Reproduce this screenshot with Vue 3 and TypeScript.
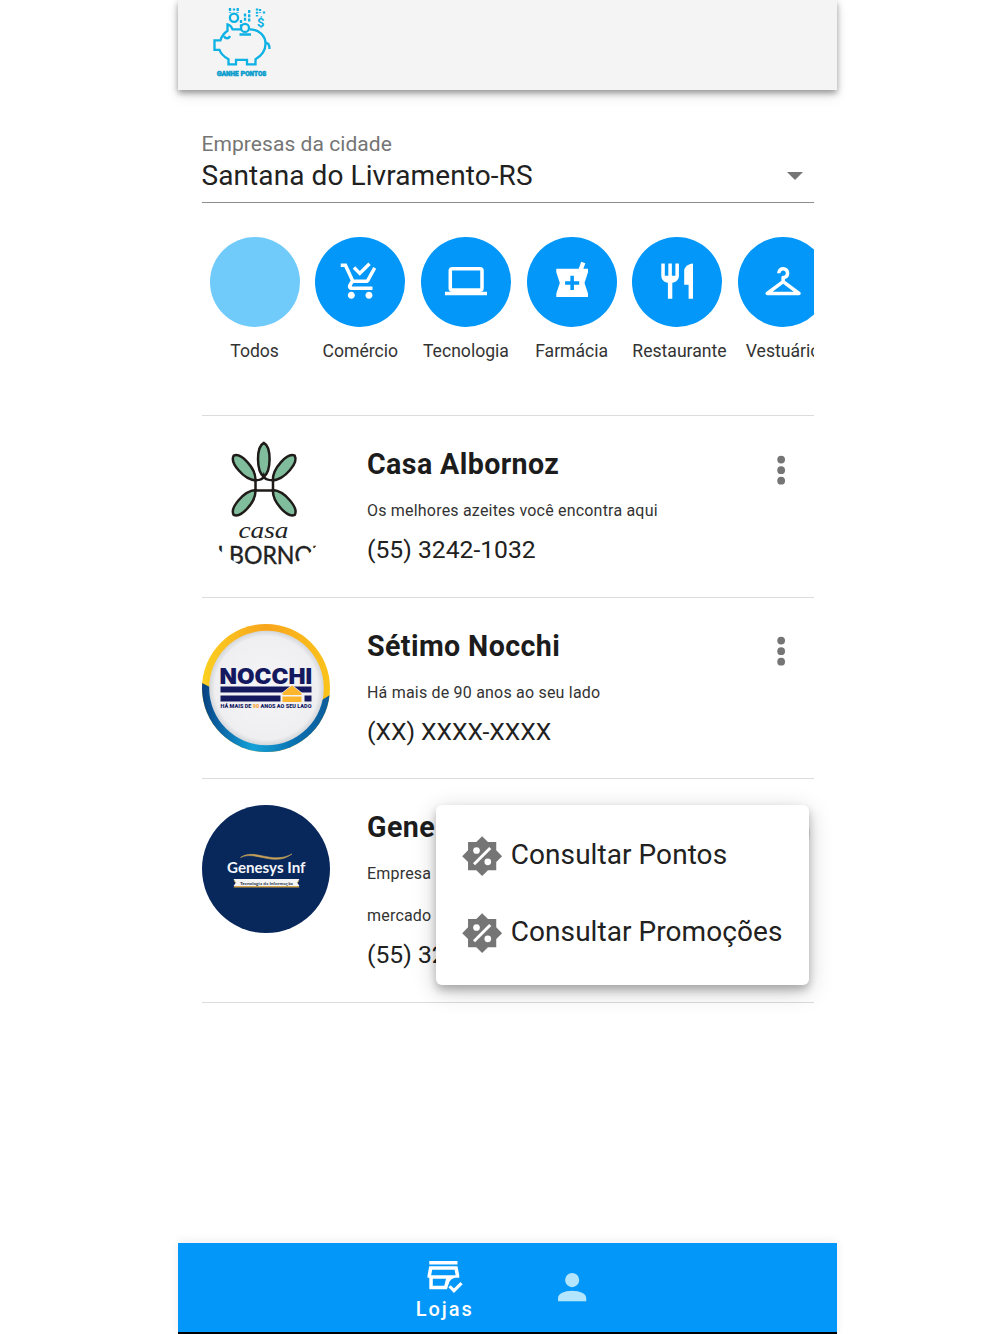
<script setup lang="ts">
interface Category { label: string; icon: string }
interface Store { name: string; lines: string[]; phone: string; logo: string }

const categories: Category[] = [
  { label: 'Todos', icon: '' },
  { label: 'Comércio', icon: 'M9 20c0 1.1-.9 2-2 2s-2-.9-2-2 .9-2 2-2 2 .9 2 2m8-2c-1.1 0-2 .9-2 2s.9 2 2 2 2-.9 2-2-.9-2-2-2m-9.8-3.2v-.1l.9-1.7h7.4c.7 0 1.4-.4 1.7-1l3.9-7-1.7-1-3.9 7h-7L4.3 2H1v2h2l3.6 7.6L5.2 14c-.1.3-.2.6-.2 1 0 1.1.9 2 2 2h12v-2H7.4c-.1 0-.2-.1-.2-.2M18 2.8l-1.4-1.4-4.8 4.8-2.6-2.6L7.8 5l4 4z' },
  { label: 'Tecnologia', icon: 'M4 6h16v10H4m16 2a2 2 0 0 0 2-2V6a2 2 0 0 0-2-2H4c-1.11 0-2 .89-2 2v10a2 2 0 0 0 2 2H0v2h24v-2z' },
  { label: 'Farmácia', icon: 'M21 5h-2.65l1.15-3.15L17.15 1l-1.46 4H3v2l2 6-2 6v2h18v-2l-2-6 2-6zm-5 9h-3v3h-2v-3H8v-2h3V9h2v3h3z' },
  { label: 'Restaurante', icon: 'M11 9H9V2H7v7H5V2H3v7c0 2.12 1.66 3.84 3.75 3.97V22h2.5v-9.03C11.34 12.84 13 11.12 13 9V2h-2zm5-3v8h2.5v8H21V2c-2.76 0-5 2.24-5 4z' },
  { label: 'Vestuário', icon: 'M21.6 18.2L13 11.75v-.91a3.496 3.496 0 0 0-.18-6.75A3.51 3.51 0 0 0 8.5 7.5h2c0-.83.67-1.5 1.5-1.5s1.5.67 1.5 1.5c0 .84-.69 1.52-1.53 1.5-.54-.01-.97.45-.97.99v1.76L2.4 18.2c-.77.58-.36 1.8.6 1.8h18c.96 0 1.37-1.22.6-1.8M6 18l6-4.5 6 4.5z' },
]

const stores: Store[] = [
  { name: 'Casa Albornoz', lines: ['Os melhores azeites você encontra aqui'], phone: '(55) 3242-1032', logo: 'casa' },
  { name: 'Sétimo Nocchi', lines: ['Há mais de 90 anos ao seu lado'], phone: '(XX) XXXX-XXXX', logo: 'nocchi' },
  { name: 'Gene', lines: ['Empresa', 'mercado'], phone: '(55) 32', logo: 'genesys' },
]

const actions: string[] = ['Consultar Pontos', 'Consultar Promoções']
</script>

<template>
  <div class="page">
    <div class="phone">
      <header class="topbar">
        <svg class="brand" width="64" height="74" viewBox="0 0 64 74" fill="none" stroke="#0db1e4" stroke-width="2.300">
          <path d="M32 25.300h-8.500c-1-2.500-2.500-4.500-5-5v6.500c-3.500 2.500-6 5.500-7 9.500h-6v9.500h5c1 3.500 4.500 7 9 9.500v5h7.500v-4.500h11v4.500h8.500v-5c6-3.500 10-9 10-15.500 0-8.500-7-14.500-16-14.500" />
          <path d="M15 32c1.200 3 4.800 3 6 0M57 39c2.500 0 3.500 3 3.500 6M30.500 30.500h11.500" />
          <circle cx="25" cy="13.700" r="4.100" />
          <circle cx="36" cy="23.900" r="4" />
          <path d="M21 4v5M28.700 4v5M32 16v7M36 9.500v8M40.200 6v12" stroke-dasharray="3 1.200" />
          <path d="M25 4.500v3M48 4.500v8M51 5v4M55 7.500v2" stroke-dasharray="2 1.200" />
          <text x="48" y="23" class="coin">$</text>
          <text x="7.800" y="71.600" textLength="49.500" lengthAdjust="spacingAndGlyphs" class="brand-name">Ganhe Pontos</text>
        </svg>
      </header>

      <main class="content">
        <section class="select">
          <span class="select-label">Empresas da cidade</span>
          <div class="select-value">
            <span>Santana do Livramento-RS</span>
            <i class="caret"></i>
          </div>
        </section>

        <nav class="categories">
          <div v-for="c in categories" :key="c.label" class="category">
            <span class="disc" :class="{ active: !c.icon }">
              <svg v-if="c.icon" class="icon" viewBox="0 0 24 24"><path :d="c.icon" /></svg>
            </span>
            <span class="category-label">{{ c.label }}</span>
          </div>
        </nav>

        <section class="stores">
          <article v-for="(s, i) in stores" :key="s.name" class="store">
            <svg class="logo" viewBox="0 0 128 128">
              <g v-if="s.logo === 'casa'">
                <clipPath id="casa-clip"><circle cx="64" cy="64" r="64" /></clipPath>
                <g fill="#7fbd9d" stroke="#1e1b18" stroke-width="2.500">
                  <path d="M-17 0C-13-7.700 11-7.700 17 0 11 7.700-13 7.700-17 0z" transform="translate(61.800 17.800) rotate(90)" />
                  <path d="M-16.500 0C-14-7.700 8-8.300 16.500 0 8 8.300-14 7.700-16.500 0z" transform="translate(42.600 26) rotate(48.700)" />
                  <path d="M-16.500 0C-14-7.700 8-8.300 16.500 0 8 8.300-14 7.700-16.500 0z" transform="translate(81.800 26) rotate(131.300)" />
                  <path d="M-16.500 0C-14-7.700 8-8.300 16.500 0 8 8.300-14 7.700-16.500 0z" transform="translate(42.600 60.500) rotate(-48.700)" />
                  <path d="M-16.500 0C-14-7.700 8-8.300 16.500 0 8 8.300-14 7.700-16.500 0z" transform="translate(81.800 60.500) rotate(-131.300)" />
                  <path d="M53.500 38v11M71 38v11M53.500 48.600H71M53.500 38.300c4.500 0 7.500-1 8.300-4 .8 3 4.700 4 9.200 4" fill="none" />
                </g>
                <text x="36.500" y="96" textLength="50" lengthAdjust="spacingAndGlyphs" class="casa-script">casa</text>
                <g clip-path="url(#casa-clip)">
                  <text x="-.5" y="121.500" textLength="125" lengthAdjust="spacingAndGlyphs" class="casa-caps">ALBORNOZ</text>
                </g>
              </g>
              <g v-else-if="s.logo === 'nocchi'">
                <defs>
                  <linearGradient id="gold" x1="0" x2="1"><stop offset="0" stop-color="#fbd020" /><stop offset=".5" stop-color="#f8a51c" /><stop offset="1" stop-color="#fbc31b" /></linearGradient>
                  <linearGradient id="sea" x1="0" x2="1"><stop offset="0" stop-color="#083f7d" /><stop offset=".1" stop-color="#0a5c9e" /><stop offset=".4" stop-color="#13a2d8" /><stop offset=".75" stop-color="#0a6eae" /><stop offset="1" stop-color="#0d5c9a" /></linearGradient>
                  <radialGradient id="plate"><stop offset="0" stop-color="#f5f5f7" /><stop offset=".9" stop-color="#efeff1" /><stop offset="1" stop-color="#d4d6da" /></radialGradient>
                  <clipPath id="ring"><circle cx="64" cy="64" r="64" /></clipPath>
                </defs>
                <circle cx="64" cy="64" r="64" fill="url(#gold)" />
                <path clip-path="url(#ring)" d="M0 59l10 5 108 13 10-6v57H0z" fill="url(#sea)" />
                <circle cx="64.500" cy="64" r="57.300" fill="url(#plate)" />
                <text x="17.500" y="59.500" textLength="92.500" lengthAdjust="spacingAndGlyphs" class="nocchi-name">NOCCHI</text>
                <path d="M18.500 62.500h91v6h-91zM18.500 71.500h60v6h-60zM102.500 71.500h7v6h-7z" fill="#14195f" />
                <path d="M90 61.500L80.500 69v2h19v-2zM80.500 72.500h19V78h-19z" fill="#fbb62d" stroke="#f4f4f6" stroke-width="1.200" paint-order="stroke" />
                <text x="18.500" y="84" textLength="91" lengthAdjust="spacingAndGlyphs" class="nocchi-tag">HÁ MAIS DE <tspan fill="#f2a33a">90</tspan> ANOS AO SEU LADO</text>
              </g>
              <g v-else>
                <circle cx="64" cy="64" r="64" fill="#08275b" />
                <path d="M38.500 52.500c7-5 15-3 25-1s18 2 26.500-2.500c-9 6.500-17 6-27 4s-17-4-24.500-.5z" fill="#c7a25a" stroke="#c7a25a" stroke-width=".6" />
                <text x="25" y="67.700" textLength="78.500" lengthAdjust="spacingAndGlyphs" class="genesys-name">Genesys Inf</text>
                <path d="M31.500 75.500h66l-2.500 3 2.500 4h-66l2.500-4z" fill="#d4a64b" />
                <path d="M31.500 74h66L95 77.500l2.500 3.500h-66l2.500-3.500z" fill="#f5f5f5" />
                <text x="38" y="79.500" textLength="53" lengthAdjust="spacingAndGlyphs" class="genesys-tag">Tecnologia da Informação</text>
              </g>
            </svg>
            <div class="info">
              <h2>{{ s.name }}</h2>
              <p v-for="l in s.lines" :key="l" class="desc">{{ l }}</p>
              <p class="tel">{{ s.phone }}</p>
            </div>
            <button class="more" :class="{ open: i === 2 }" aria-label="Opções">
              <svg class="icon" viewBox="0 0 24 24"><circle cx="12" cy="6" r="2.200" /><circle cx="12" cy="12" r="2.200" /><circle cx="12" cy="18" r="2.200" /></svg>
            </button>
            <div v-if="i === 2" class="menu">
              <div v-for="a in actions" :key="a" class="menu-item">
                <svg class="icon" viewBox="0 0 24 24">
                  <path d="M20 8.690V4h-4.690L12 .690 8.690 4H4v4.690L.690 12 4 15.310V20h4.690L12 23.310 15.310 20H20v-4.690L23.310 12z" />
                  <g fill="#fff"><circle cx="8.800" cy="8.800" r="1.900" /><circle cx="15.200" cy="15.200" r="1.900" /></g>
                  <path d="M7.400 16.600l9.200-9.200" stroke="#fff" stroke-width="1.700" />
                </svg>
                <span>{{ a }}</span>
              </div>
            </div>
          </article>
        </section>
      </main>

      <footer class="tabs">
        <div class="tab">
          <svg class="icon" viewBox="0 0 24 24">
            <path fill-rule="evenodd" d="M3 4h16v2H3zM3 7h16l1 5v1.500h-1.500c-2.500 0-4 1.500-4.500 3.500l-1 3H3v-6.500H2V12zm1.640 2L4.040 12h13.920l-.6-3zM5 14v4h6.500l1-4z" />
            <path d="M14.500 18.300l2.500 2.500 4.300-4.300" fill="none" stroke="#fff" stroke-width="1.800" />
          </svg>
          <span>Lojas</span>
        </div>
        <div class="tab idle">
          <svg class="icon" viewBox="0 0 24 24"><path d="M12 4a4 4 0 1 1 0 8 4 4 0 0 1 0-8m0 10c4.420 0 8 1.790 8 4v2H4v-2c0-2.210 3.580-4 8-4z" /></svg>
        </div>
      </footer>
    </div>
  </div>
</template>

<style>
body { margin: 0; background: #fff; }
</style>

<style scoped>
.page { height: 1334px; display: flex; overflow: hidden; font-family: Roboto, "Liberation Sans", sans-serif; color: #212121; }
.phone { width: 659.500px; height: 1334px; margin-left: 177.500px; display: flex; flex-direction: column; }
.topbar { height: 89.500px; flex: none; box-sizing: border-box; padding: 3.500px 0 0 31.700px; background: #f4f4f4; box-shadow: 0 3px 6px rgba(0, 0, 0, .36), 0 6px 12px rgba(0, 0, 0, .1); }
.brand { display: block; }
.coin { font: bold 13px Roboto, sans-serif; fill: #0db1e4; stroke: none; }
.brand-name { font: bold 8px Roboto, sans-serif; font-variant: small-caps; fill: #0a9dcd; stroke: #0a9dcd; stroke-width: .6px; }
.content { flex: 1; min-height: 0; padding: 0 23px 0 24px; }
.icon { width: 42.300px; height: 42.300px; display: block; fill: currentColor; }

.select { height: 113px; box-sizing: border-box; padding-top: 42px; border-bottom: 1px solid #8c8c8c; }
.select-label { display: block; height: 24.500px; line-height: 25px; font-size: 21px; letter-spacing: .060px; color: #757575; }
.select-value { display: flex; align-items: center; justify-content: space-between; height: 38px; font-size: 28px; letter-spacing: .090px; padding-right: 11px; }
.caret { margin-top: 2px; border: 8.500px solid transparent; border-top-color: #757575; border-bottom: 0; }

.categories { display: flex; gap: 15.700px; overflow: hidden; height: 178px; padding: 34px 0 0 8.100px; box-sizing: border-box; }
.category { flex: 0 0 90px; min-width: 0; display: flex; flex-direction: column; align-items: safe center; gap: 13px; }
.disc { width: 90px; height: 90px; border-radius: 50%; background: #0297f8; color: #fff; display: flex; align-items: center; justify-content: center; flex: none; }
.disc.active { background: #70cbfb; }
.category-label { font-size: 17.600px; line-height: 22px; color: #333; }

.stores { margin-top: 34.500px; border-top: 1px solid #dcdcdc; }
.store { position: relative; display: flex; align-items: flex-start; padding: 26px 0 26.500px; border-bottom: 1px solid #dcdcdc; }
.logo { width: 128px; height: 128px; flex: none; overflow: visible; }
.info { flex: 1; margin-left: 37.500px; }
.info h2 { margin: 0 0 3px; padding-top: 1px; font-size: 28.600px; line-height: 43px; font-weight: 700; letter-spacing: .400px; color: #1c1c1c; }
.desc { margin: 0; padding-top: 0; font-size: 16px; line-height: 42px; letter-spacing: .200px; color: #333; }
.desc:first-of-type { padding-top: 1px; }
.tel { margin: 0; font-size: 24.700px; line-height: 38px; margin-top: -1px; padding-bottom: 1px; }
.more { width: 58px; height: 58px; margin: -1px 4px 0 0; padding: 0; border: 0; border-radius: 50%; background: none; color: #757575; display: flex; align-items: center; justify-content: center; }
.more.open { background: #ddd; clip-path: inset(3px 0); }
.menu { position: absolute; right: 5px; top: 26px; width: 373px; height: 180px; box-sizing: border-box; padding: 12px 0 0 25.300px; border-radius: 6px; background: #fff; box-shadow: 0 5px 8px rgba(0, 0, 0, .24), 0 6px 24px rgba(0, 0, 0, .2); }
.menu-item { display: flex; align-items: center; height: 77px; font-size: 28px; letter-spacing: .060px; }
.menu-item .icon { margin: 1px 7.200px 0 0; color: #757575; }
.menu-item span { padding-bottom: 3px; }

.tabs { height: 91px; flex: none; box-sizing: border-box; border-bottom: 2px solid #000; padding-left: 2px; background: #0297f8; display: flex; justify-content: center; box-shadow: 0 -2px 10px rgba(0, 0, 0, .07); }
.tab { width: 127px; display: flex; flex-direction: column; align-items: center; justify-content: center; color: #fff; font-size: 20px; font-weight: 500; line-height: 24px; letter-spacing: 2px; }
.tab.idle { color: #b3e5fc; }

.casa-script { font: italic 24px "Liberation Serif", serif; fill: #222; }
.casa-caps { font: 25.500px Lato, sans-serif; fill: #222; stroke: #222; stroke-width: .4px; }
.nocchi-name { font: 900 21px Inter, sans-serif; fill: #14195f; }
.nocchi-tag { font: 900 4.500px Roboto, sans-serif; fill: #14195f; }
.genesys-name { font: bold 15px Lato, sans-serif; fill: #f2f5fa; }
.genesys-tag { font: bold 4.500px Lato, sans-serif; fill: #26324d; }
</style>
